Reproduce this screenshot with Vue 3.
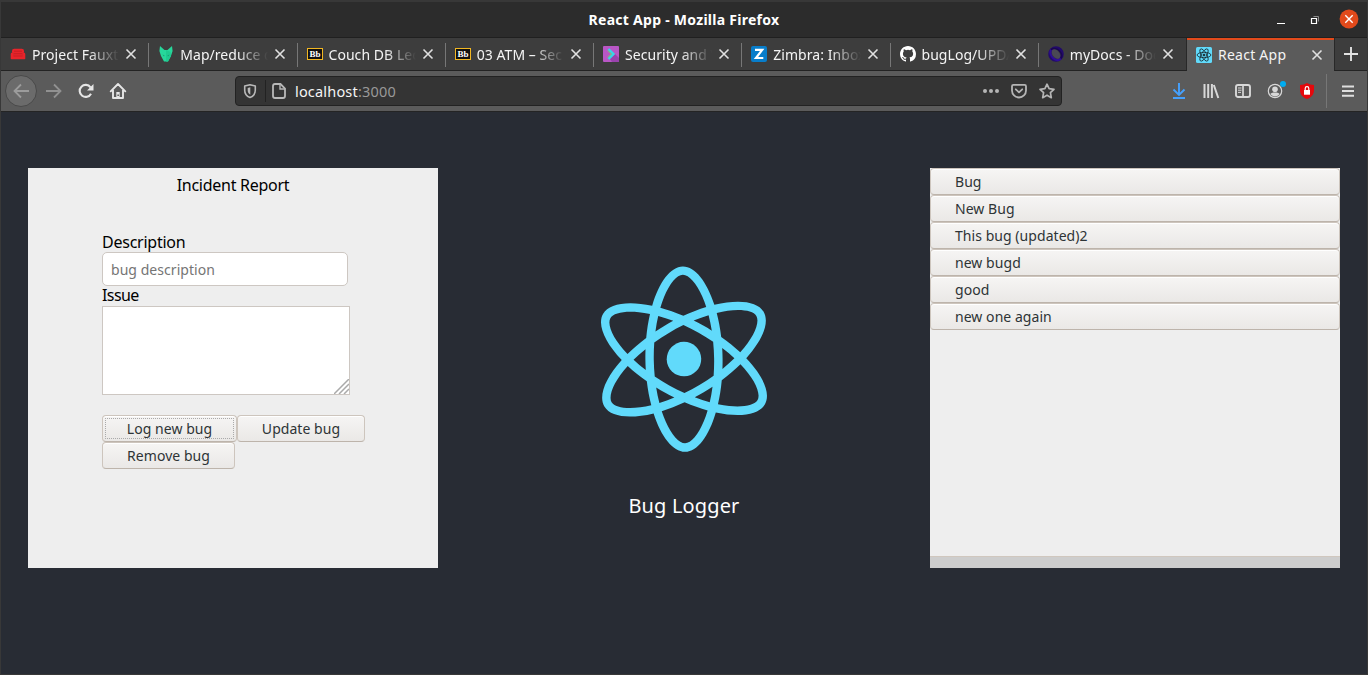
<script setup>
import { ref } from 'vue'

const tabs = [
  { icon: 'couch', title: 'Project Fauxt' },
  { icon: 'fox', title: 'Map/reduce d' },
  { icon: 'bb', title: 'Couch DB Lec' },
  { icon: 'bb', title: '03 ATM – Sec' },
  { icon: 'sec', title: 'Security and V' },
  { icon: 'zimbra', title: 'Zimbra: Inbox' },
  { icon: 'github', title: 'bugLog/UPDA' },
  { icon: 'docs', title: 'myDocs - Doc' },
  { icon: 'react', title: 'React App', active: true },
]

const bugs = ['Bug', 'New Bug', 'This bug (updated)2', 'new bugd', 'good', 'new one again']
const description = ref('')
const issue = ref('')

const atom =
  'M666.3 296.5c0-32.5-40.7-63.3-103.1-82.4 14.4-63.6 8-114.2-20.2-130.4-6.5-3.8-14.1-5.6-22.4-5.6v22.3c4.6 0 8.3.9 11.4 2.6 13.6 7.8 19.5 37.5 14.9 75.7-1.1 9.4-2.9 19.3-5.1 29.4-19.6-4.8-41-8.5-63.5-10.9-13.5-18.5-27.5-35.3-41.6-50 32.6-30.3 63.2-46.9 84-46.9V78c-27.5 0-63.5 19.6-99.9 53.6-36.4-33.8-72.4-53.2-99.9-53.2v22.3c20.7 0 51.4 16.5 84 46.6-14 14.7-28 31.4-41.3 49.9-22.6 2.4-44 6.1-63.6 11-2.3-10-4-19.7-5.2-29-4.7-38.2 1.1-67.9 14.6-75.8 3-1.8 6.9-2.6 11.5-2.6V78.5c-8.4 0-16 1.8-22.6 5.6-28.1 16.2-34.4 66.7-19.9 130.1-62.2 19.2-102.7 49.9-102.7 82.3 0 32.5 40.7 63.3 103.1 82.4-14.4 63.6-8 114.2 20.2 130.4 6.5 3.8 14.1 5.6 22.5 5.6 27.5 0 63.5-19.6 99.9-53.6 36.4 33.8 72.4 53.2 99.9 53.2 8.4 0 16-1.8 22.6-5.6 28.1-16.2 34.4-66.7 19.9-130.1 62-19.1 102.5-49.9 102.5-82.3zm-130.2-66.7c-3.7 12.9-8.3 26.2-13.5 39.5-4.1-8-8.4-16-13.1-24-4.6-8-9.5-15.8-14.4-23.4 14.2 2.1 27.9 4.7 41 7.9zm-45.8 106.5c-7.8 13.5-15.8 26.3-24.1 38.2-14.9 1.3-30 2-45.2 2-15.1 0-30.2-.7-45-1.9-8.3-11.9-16.4-24.6-24.2-38-7.6-13.1-14.5-26.4-20.8-39.8 6.2-13.4 13.2-26.8 20.7-39.9 7.8-13.5 15.8-26.3 24.1-38.2 14.9-1.3 30-2 45.2-2 15.1 0 30.2.7 45 1.9 8.3 11.9 16.4 24.6 24.2 38 7.6 13.1 14.5 26.4 20.8 39.8-6.3 13.4-13.2 26.8-20.7 39.9zm32.3-13c5.4 13.4 10 26.8 13.8 39.8-13.1 3.2-26.9 5.9-41.2 8 4.9-7.7 9.8-15.6 14.4-23.7 4.6-8 8.9-16.1 13-24.1zM421.2 430c-9.3-9.6-18.6-20.3-27.8-32 9 .4 18.2.7 27.5.7 9.4 0 18.7-.2 27.8-.7-9 11.7-18.3 22.4-27.5 32zm-74.4-58.9c-14.2-2.1-27.9-4.7-41-7.9 3.7-12.9 8.3-26.2 13.5-39.5 4.1 8 8.4 16 13.1 24 4.7 8 9.5 15.8 14.4 23.4zM420.7 163c9.3 9.6 18.6 20.3 27.8 32-9-.4-18.2-.7-27.5-.7-9.4 0-18.7.2-27.8.7 9-11.7 18.3-22.4 27.5-32zm-74 58.9c-4.9 7.7-9.8 15.6-14.4 23.7-4.6 8-8.9 16-13 24-5.4-13.4-10-26.8-13.8-39.8 13.1-3.1 26.9-5.8 41.2-7.9zm-90.5 125.2c-35.4-15.1-58.3-34.9-58.3-50.6 0-15.7 22.9-35.6 58.3-50.6 8.6-3.7 18-7 27.7-10.1 5.7 19.6 13.2 40 22.5 60.9-9.2 20.8-16.6 41.1-22.2 60.6-9.9-3.1-19.3-6.5-28-10.2zM310 490c-13.6-7.8-19.5-37.5-14.9-75.7 1.1-9.4 2.9-19.3 5.1-29.4 19.6 4.8 41 8.5 63.5 10.9 13.5 18.5 27.5 35.3 41.6 50-32.6 30.3-63.2 46.9-84 46.9-4.5-.1-8.3-1-11.3-2.7zm237.2-76.2c4.7 38.2-1.1 67.9-14.6 75.8-3 1.8-6.9 2.6-11.5 2.6-20.7 0-51.4-16.5-84-46.6 14-14.7 28-31.4 41.3-49.9 22.6-2.4 44-6.1 63.6-11 2.3 10.1 4.1 19.8 5.2 29.1zm38.5-66.7c-8.6 3.7-18 7-27.7 10.1-5.7-19.6-13.2-40-22.5-60.9 9.2-20.8 16.6-41.1 22.2-60.6 9.9 3.1 19.3 6.5 28.1 10.2 35.4 15.1 58.3 34.9 58.3 50.6-.1 15.7-23 35.6-58.4 50.6z'
</script>

<template>
  <div class="window">
    <header class="titlebar">
      <span class="window-title">React App - Mozilla Firefox</span>
      <div class="window-controls">
        <svg width="18" height="18" viewBox="0 0 18 18"><path d="M5 12.5h8" stroke="#fff" /></svg>
        <svg width="18" height="18" viewBox="0 0 18 18" fill="none"><path d="M5.500 7.500h5v5h-5z" stroke="#fff" stroke-width="1.200" /><path d="M7.500 5.500h5v5" stroke="#8c8c8c" /></svg>
        <svg width="20" height="20" viewBox="0 0 20 20"><circle cx="10" cy="9" r="9.400" fill="#e24a1b" /><path d="M6.300 5.300l7.400 7.400M13.700 5.300l-7.400 7.400" stroke="#fff" stroke-width="1.400" /></svg>
      </div>
    </header>

    <nav class="tabs">
      <div v-for="tab in tabs" :key="tab.title" class="tab" :class="{ active: tab.active }">
        <svg class="favicon" width="16" height="16" viewBox="0 0 16 16">
          <g v-if="tab.icon === 'couch'" fill="#e8242a">
            <path d="M2 6.500V5q0-2.300 2.300-2.300h7.400Q14 2.700 14 5v1.500l-2 1.500H4z" />
            <path d="M.7 8q0-1.500 1.500-1.500T3.900 8v1.500h8.200V8q.2-1.500 1.700-1.500T15.300 8v4.500q0 .8-.8.800h-13q-.8 0-.8-.8z" />
            <path d="M4 7h8v3H4z" />
            <path d="M4 5.200h8M4 7.700h8M3.500 10h9" stroke="#b3191f" stroke-width=".6" />
          </g>
          <g v-else-if="tab.icon === 'fox'">
            <path d="M2 0l4.500 4h3L14 0l.6 5L13 10l-3 5.500H6L3 10 1.400 5z" fill="#27d79b" />
            <path d="M8 4v11.500h2L13 10l-.5-4z" fill="#1fca90" /><path d="M4.500 8.500l2 1L6 10.500zM11.500 8.500l-2 1 .5 1z" fill="#14996b" />
          </g>
          <g v-else-if="tab.icon === 'bb'">
            <rect x=".5" y="2.500" width="15" height="11" fill="#111" stroke="#f2b722" />
            <text x="8" y="11" text-anchor="middle" class="bb-text">Bb</text>
          </g>
          <g v-else-if="tab.icon === 'sec'">
            <rect width="16" height="16" rx="1" fill="#b957c6" /><path d="M7 13l5-5 4 4v4H9z" fill="#9a43ad" />
            <path d="M5.500 3L10.500 8l-5 5" fill="none" stroke="#35d8e5" stroke-width="2.300" /><path d="M4.800 4.500L8.300 8l-3.500 3.500" fill="none" stroke="#69ea58" stroke-width=".9" />
          </g>
          <g v-else-if="tab.icon === 'zimbra'">
            <rect width="16" height="16" rx="2" fill="#087dca" />
            <path d="M4 3.900h7.200L5 12h7.300" fill="none" stroke="#fff" stroke-width="2.200" />
          </g>
          <path v-else-if="tab.icon === 'github'" fill="#fff" d="M8 0C3.580 0 0 3.580 0 8c0 3.540 2.290 6.530 5.470 7.590.4.070.55-.17.55-.38 0-.19-.01-.82-.01-1.490-2.010.37-2.530-.49-2.690-.94-.09-.23-.48-.94-.82-1.130-.28-.15-.68-.52-.01-.53.63-.01 1.080.58 1.230.82.72 1.210 1.870.87 2.330.66.07-.52.28-.87.51-1.070-1.780-.2-3.640-.89-3.640-3.950 0-.87.31-1.590.82-2.150-.08-.2-.36-1.020.08-2.120 0 0 .67-.21 2.200.82a7.600 7.600 0 0 1 4 0c1.530-1.040 2.200-.82 2.200-.82.44 1.100.16 1.920.08 2.120.51.56.82 1.270.82 2.150 0 3.070-1.870 3.750-3.650 3.950.29.25.54.73.54 1.480 0 1.070-.01 1.930-.01 2.200 0 .21.15.46.55.38A8.010 8.010 0 0 0 16 8c0-4.420-3.580-8-8-8z" />
          <g v-else-if="tab.icon === 'docs'" fill="none">
            <circle cx="8" cy="8" r="6.300" stroke="#220a6b" stroke-width="3" />
            <path d="M3 3.500Q1 8 5 12t8 .5" stroke="#2f0d96" stroke-width="2" /><path d="M3 3.500Q8 1 11.500 5t1.500 7.500" stroke="#1a0650" stroke-width="1.500" />
            <ellipse cx="8" cy="8" rx="3.300" ry="5.400" transform="rotate(-40 8 8)" fill="#4a4855" />
          </g>
          <g v-else fill="none" stroke="#17282e" stroke-width=".8">
            <rect width="16" height="16" rx="1.500" fill="#61dafb" stroke="none" />
            <ellipse cx="8" cy="8" rx="6.900" ry="2.700" /><ellipse cx="8" cy="8" rx="6.900" ry="2.700" transform="rotate(60 8 8)" /><ellipse cx="8" cy="8" rx="6.900" ry="2.700" transform="rotate(120 8 8)" />
            <circle cx="8" cy="8" r="1" fill="#17282e" />
          </g>
        </svg>
        <span class="tab-title">{{ tab.title }}</span>
        <svg class="close" width="12" height="12" viewBox="0 0 12 12"><path d="M1.500 1.500l9 9M10.500 1.500l-9 9" stroke="#e0e0e0" stroke-width="1.600" /></svg>
      </div>
      <div class="new-tab">
        <svg width="16" height="16" viewBox="0 0 16 16"><path d="M8 1v14M1 8h14" stroke="#e2e2e2" stroke-width="1.900" /></svg>
      </div>
    </nav>

    <div class="toolbar">
      <div class="history">
        <span class="back"><svg width="16" height="16" viewBox="0 0 16 16"><path d="M16 8H1.500M8 1.500L1.500 8 8 14.500" fill="none" stroke="#9c9c9c" stroke-width="1.800" /></svg></span>
        <svg class="forward" width="16" height="16" viewBox="0 0 16 16"><path d="M0 8h14.500M8 1.500L14.500 8 8 14.500" fill="none" stroke="#919191" stroke-width="1.800" /></svg>
        <svg class="reload" width="16" height="16" viewBox="0 0 16 16"><path d="M13 10.700A6 6 0 1 1 12.500 4.300" fill="none" stroke="#e6e6e6" stroke-width="2.100" /><path d="M15.500 1v6.500H9z" fill="#e6e6e6" /></svg>
        <svg class="home" width="16" height="16" viewBox="0 0 16 16"><path d="M.7 8.300L8 1l7.300 7.300M3 7v8h10V7" fill="none" stroke="#e6e6e6" stroke-width="1.900" stroke-linejoin="round" stroke-linecap="round" /><path d="M6.300 14.500V9h3.400v5.500" fill="#e6e6e6" /><path d="M7.400 11.500h1.500V13H7.400z" fill="#555" /></svg>
      </div>

      <div class="urlbar">
        <svg class="shield" width="16" height="16" viewBox="0 0 16 16"><path d="M8 1.700l5.300 1.300v4.200c0 3.700-2 6-5.300 7.300-3.300-1.300-5.300-3.600-5.300-7.300V3z" fill="none" stroke="#b8b8b8" stroke-width="1.600" stroke-linejoin="round" /><path d="M8.300 4.300v7.500C6.300 10.500 5.700 9.200 5.700 7V4.900z" fill="#b8b8b8" /></svg>
        <i class="url-divider"></i>
        <svg class="page-icon" width="16" height="16" viewBox="0 0 16 16"><path d="M4 1h5.500L14 5.500V13q0 2-2 2H4q-2 0-2-2V3q0-2 2-2z" fill="none" stroke="#b8b8b8" stroke-width="1.800" /><path d="M9 1v5h5" fill="none" stroke="#b8b8b8" stroke-width="1.400" /></svg>
        <span class="url">localhost<span class="port">:3000</span></span>
        <div class="url-actions">
          <svg width="16" height="16" viewBox="0 0 16 16" fill="#b5b5b5"><circle cx="2" cy="8" r="2" /><circle cx="8" cy="8" r="2" /><circle cx="14" cy="8" r="2" /></svg>
          <svg width="16" height="16" viewBox="0 0 16 16" fill="none" stroke="#b5b5b5" stroke-width="1.800" stroke-linecap="round" stroke-linejoin="round"><path d="M2.400 1.900h11.200q1.400 0 1.400 1.400V7.500a7 7 0 0 1-14 0V3.300q0-1.400 1.400-1.400z" /><path d="M4.800 6.300L8 9.300l3.200-3" /></svg>
          <svg width="16" height="16" viewBox="0 0 16 16"><path d="M8 1.200l2.100 4.500 4.900.6-3.600 3.400.9 5L8 12.200l-4.300 2.500.9-5L1 6.300l4.900-.6z" fill="none" stroke="#b5b5b5" stroke-width="1.700" stroke-linejoin="round" /></svg>
        </div>
      </div>

      <div class="tools">
        <svg width="16" height="16" viewBox="0 0 16 16" fill="none" stroke="#45a1ff" stroke-width="1.900"><path d="M8 0v12M2.500 6.500L8 12l5.500-5.500M2 15h12" /></svg>
        <svg width="16" height="16" viewBox="0 0 16 16" stroke="#d8d8d8" stroke-width="2"><path d="M1.500 1v14M5.200 1v14M8.900 1v14M10.800 2L15.300 15" /></svg>
        <svg width="16" height="16" viewBox="0 0 16 16" fill="none" stroke="#d8d8d8"><rect x="1" y="2" width="14" height="12" rx="2" stroke-width="1.900" /><path d="M8 2v12" stroke-width="1.700" /><path d="M3 5h3.500M3 7.200h3.500M3 9.400h3" stroke-width="1" /></svg>
        <svg class="account" width="20" height="20" viewBox="0 0 20 20"><circle cx="10" cy="10" r="6.700" fill="none" stroke="#d8d8d8" stroke-width="1.200" /><circle cx="10" cy="8.200" r="2.800" fill="#d8d8d8" /><path d="M5.400 13q1-1.500 3-1.500h3.200q2 0 3 1.500a5.500 5.500 0 0 1-9.200 0z" fill="#d8d8d8" /><circle cx="18" cy="3" r="3" fill="#00adf2" /></svg>
        <svg width="16" height="16" viewBox="0 0 16 16"><path d="M8 0q3 2 7 2v5c0 5-3 7.500-7 9-4-1.500-7-4-7-9V2q4 0 7-2z" fill="#e4080c" /><rect x="5" y="7" width="6" height="4.700" fill="#fff" /><path d="M6.200 7V5.500a1.800 1.800 0 0 1 3.600 0V7" fill="none" stroke="#fff" stroke-width="1.200" /></svg>
        <i class="tool-divider"></i>
        <svg width="16" height="16" viewBox="0 0 16 16" stroke="#dedede" stroke-width="1.900"><path d="M2 3.500h12M2 8h12M2 12.800h12" /></svg>
      </div>
    </div>

    <main class="page">
      <section class="panel report">
        <h1>Incident Report</h1>
        <form @submit.prevent>
          <label for="description">Description</label>
          <input id="description" v-model="description" placeholder="bug description" />
          <label for="issue">Issue</label>
          <div class="area">
            <textarea id="issue" v-model="issue"></textarea>
            <svg class="grip" width="15" height="15" viewBox="0 0 15 15"><path d="M0 15L15 0M5 15L15 5M10 15l5-5" stroke="#aaa" stroke-width="1.500" /></svg>
          </div>
          <div class="actions">
            <button class="btn focused">Log new bug</button>
            <button class="btn update">Update bug</button>
            <button class="btn remove">Remove bug</button>
          </div>
        </form>
      </section>

      <section class="brand">
        <svg width="318" height="225" viewBox="0 0 841.9 595.3" class="logo">
          <g fill="#61dafb" transform="rotate(89.250 420.900 296.500)"><path :d="atom" /><circle cx="420.900" cy="296.500" r="45.700" /></g>
        </svg>
        <p>Bug Logger</p>
      </section>

      <section class="panel list">
        <button v-for="bug in bugs" :key="bug" class="btn">{{ bug }}</button>
        <div class="scrollbar"></div>
      </section>
    </main>
  </div>
</template>

<style>
body { margin: 0; overflow: hidden; background: #282c34; }
</style>

<style scoped>
* { box-sizing: border-box; }
svg { display: block; flex: none; overflow: visible; }
.window { width: 1368px; height: 675px; display: flex; flex-direction: column; border: 1px solid #383838; border-top: 0; background: #282c34; font: 14px "Noto Sans", sans-serif; }
.titlebar { height: 38px; display: grid; grid-template-columns: 1fr auto 1fr; align-items: center; background: #2c2c2c; border-top: 2px solid #383838; border-bottom: 1px solid #202020; }
.window-title { grid-column: 2; color: #fff; font-size: 14px; font-weight: 700; letter-spacing: .27px; white-space: nowrap; }
.window-controls { display: flex; justify-content: flex-end; align-items: center; gap: 16px; padding-right: 8px; }
.window-controls svg:nth-child(2) { margin-right: -1px; }
.tabs { height: 33px; display: grid; grid-template-columns: repeat(8, 148.250px) 147px 1fr; background: #3d3d3d; }
.tab { min-width: 0; display: flex; align-items: center; padding: 0 12px 0 9px; color: #f4f4f4; border-bottom: 1px solid #232323; background: linear-gradient(#777, #777) right 5px / 1px 24px no-repeat; }
.tab:nth-child(8) { background: none; border-right: 1px solid #282828; }
.tab.active { background: #5b5b5b; border-top: 2px solid #e24a1b; border-bottom: 0; padding: 0 11px 2px 9px; }
.tab.active .tab-title { mask-image: none; letter-spacing: .25px; }
.tab-title { flex: 1; min-width: 0; margin: 0 5px 0 6px; white-space: nowrap; letter-spacing: .05px; mask-image: linear-gradient(to right, #000 calc(100% - 32px), transparent calc(100% - 1px)); }
.new-tab { display: grid; place-items: center; border-left: 1px solid #282828; border-bottom: 1px solid #232323; }
.bb-text { font: 700 9px "Liberation Serif", serif; fill: #fff; }
.toolbar { height: 41px; display: flex; align-items: center; background: #5b5b5b; border-bottom: 1px solid #242424; }
.history { width: 234px; display: flex; align-items: center; padding-left: 4px; }
.back { width: 32px; height: 32px; display: grid; place-items: center; border-radius: 50%; background: #6b6b6b; border: 1px solid #494949; }
.forward { margin-left: 9px; }
.reload { margin-left: 16px; }
.home { margin-left: 16px; }
.urlbar { width: 827px; height: 30px; display: flex; align-items: center; padding: 0 6px; border: 1px solid #222; border-radius: 4px; background: #343434; }
.url-divider { width: 1px; height: 22px; margin: 0 5px 0 7px; background: #222; }
.url { margin-left: 8px; color: #f5f5f5; font-size: 14.500px; letter-spacing: .18px; }
.port { color: #999; }
.url-actions { display: flex; gap: 12px; margin-left: auto; }
.tools { flex: 1; display: flex; align-items: center; gap: 16px; justify-content: flex-end; padding-right: 11px; }
.account { margin: 0 -2px; }
.tool-divider { width: 1px; height: 34px; margin: 0 -3px 0 -5px; background: #777; }
.page { flex: 1; display: flex; justify-content: space-between; align-items: flex-start; padding: 56px 27px 0; }
.panel { width: 410px; height: 400px; background: #eee; }
h1 { margin: 0; padding-top: 6px; height: 64px; text-align: center; font-size: 16px; font-weight: 400; line-height: 22px; letter-spacing: -.27px; color: #000; }
form { display: flex; flex-direction: column; align-items: flex-start; padding-left: 74px; }
label { height: 20px; line-height: 20px; font-size: 16px; letter-spacing: -.24px; color: #000; }
label[for="issue"] { line-height: 19px; letter-spacing: -.6px; }
input { width: 246px; height: 34px; padding: 0 8px; border: 1px solid #cdc7c2; border-radius: 5px; background: #fff; font: 14px "Noto Sans", sans-serif; letter-spacing: .05px; outline: 0; }
input::placeholder { color: #757575; opacity: 1; }
.area { position: relative; width: 248px; height: 89px; }
textarea { display: block; width: 100%; height: 100%; border: 1px solid #cdc7c2; resize: none; background: #fff; outline: 0; }
.grip { position: absolute; right: 1px; bottom: 1px; overflow: hidden; }
.actions { display: flex; flex-wrap: wrap; width: 270px; margin-top: 20px; }
.btn { height: 27px; padding: 0 0 1px; border: 1px solid #cdc5bd; border-bottom-color: #bdb4ab; border-radius: 4px; background: linear-gradient(#f6f5f4, #eae8e6); box-shadow: inset 0 1px #fff; color: #2e3436; font: 14px "Noto Sans", sans-serif; letter-spacing: .05px; text-align: center; white-space: nowrap; }
.focused { width: 135px; outline: 1px dotted #aaa; outline-offset: -4px; }
.update { width: 128px; }
.remove { width: 133px; }
.brand { width: 318px; display: flex; flex-direction: column; align-items: center; padding-top: 79px; }
.brand p { margin: 20px 0 0; color: #fff; font-size: 20px; line-height: 28px; letter-spacing: .15px; }
.list { display: flex; flex-direction: column; }
.list .btn { width: 100%; padding-left: 24px; text-align: left; }
.scrollbar { height: 12px; margin-top: auto; background: #cdcdcd; border-top: 1px solid #d0c7be; }
</style>
